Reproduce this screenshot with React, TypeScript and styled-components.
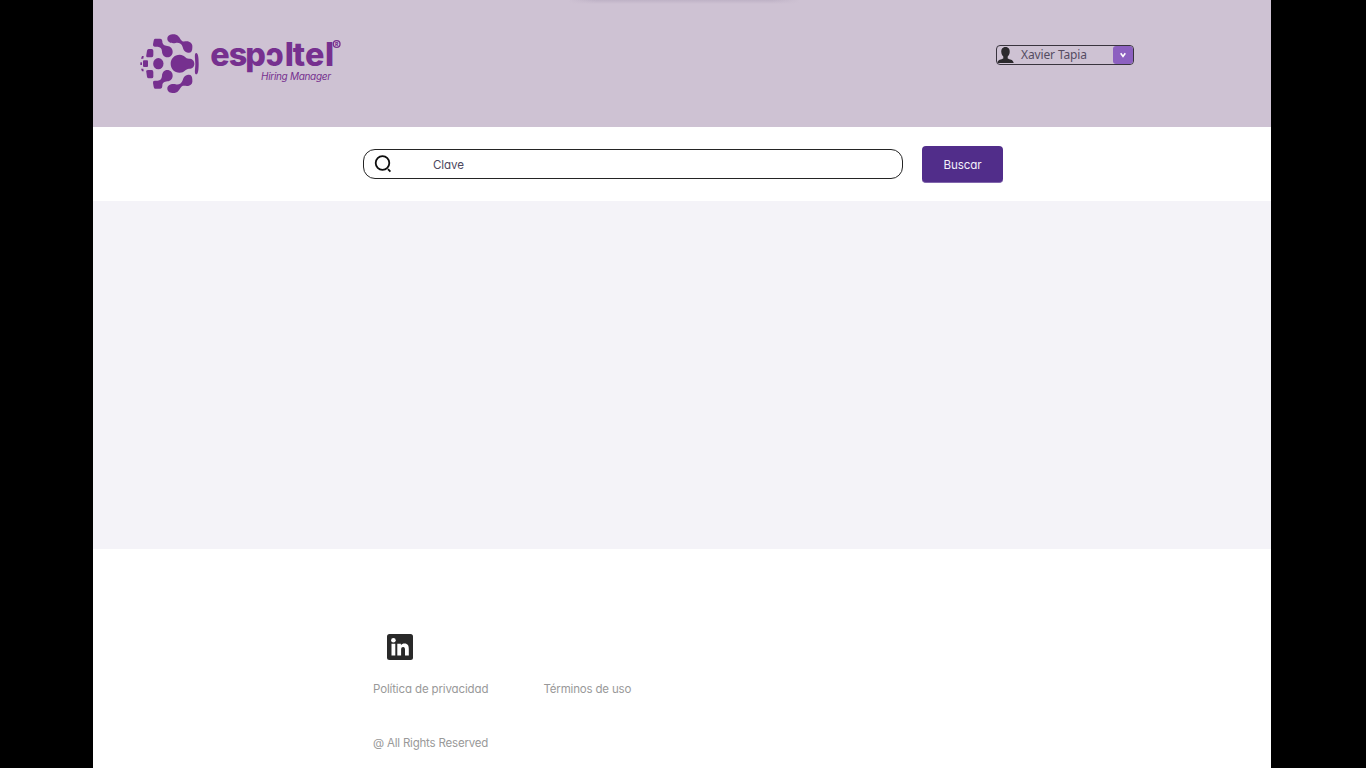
import React from 'react';
import styled, { createGlobalStyle } from 'styled-components';

const GlobalStyle = createGlobalStyle`
  * { box-sizing: border-box; }
  body { margin: 0; background: #000; overflow: hidden; }
`;

const Page = styled.div`
  width: 1178px;
  height: 768px;
  margin-left: 93px;
  display: flex;
  flex-direction: column;
  background: #fff;
  font-family: Inter, 'Liberation Sans', sans-serif;
  font-feature-settings: 'cv11';
`;

const Header = styled.header`
  height: 127px;
  display: flex;
  justify-content: space-between;
  align-items: flex-start;
  padding: 28px 137px 0 42px;
  background:
    linear-gradient(to right, #cec2d3, transparent 12%, transparent 88%, #cec2d3) 475px 0 / 232px 4px no-repeat,
    linear-gradient(to bottom, rgba(110, 95, 130, 0.16), transparent) 476px 0 / 230px 4px no-repeat,
    #cec2d3;
`;

const LogoImage = styled.svg`
  width: 210px;
  height: 70px;
  fill: #76308f;
`;

const UserSelect = styled.div`
  display: flex;
  align-items: stretch;
  width: 138px;
  height: 20px;
  margin-top: 17px;
  border: 1px solid #39343e;
  border-radius: 4px;
  overflow: hidden;
`;

const Avatar = styled.svg`
  width: 17px;
  height: 17px;
  margin-top: 1px;
  fill: #2c2a2d;
`;

const UserName = styled.span`
  flex: 1;
  padding-left: 7px;
  font: 12px/17px 'Noto Sans', sans-serif;
  letter-spacing: -0.13px;
  color: #554c62;
  white-space: nowrap;
`;

const Toggle = styled.span`
  display: flex;
  align-items: center;
  justify-content: center;
  width: 20px;
  border-radius: 3px;
  background: #8c60c0;
`;

const SearchBar = styled.section`
  height: 74px;
  display: flex;
  align-items: flex-start;
  gap: 19px;
  padding: 19px 0 0 270px;
`;

const SearchField = styled.div`
  display: flex;
  align-items: center;
  width: 540px;
  height: 30px;
  margin-top: 3px;
  padding-left: 10px;
  border: 1px solid #242424;
  border-radius: 12px;
`;

const SearchIcon = styled.svg`
  width: 18px;
  height: 18px;
  margin-right: 41px;
  fill: none;
  stroke: #0d0d0d;
  stroke-width: 1.8;
`;

const Placeholder = styled.span`
  padding-top: 2px;
  font-size: 11.6px;
  letter-spacing: -0.1px;
  color: #4d485e;
`;

const SearchButton = styled.button`
  width: 81px;
  height: 37px;
  padding: 1px 0 0;
  border: 0;
  border-bottom: 1px solid #8166ad;
  border-radius: 4px;
  background: #512d8a;
  color: #f3effa;
  font: 11.6px/36px Inter, sans-serif;
  font-feature-settings: 'cv11';
  letter-spacing: -0.1px;
`;

const Results = styled.main`
  height: 348px;
  background: #f4f3f8;
`;

const Footer = styled.footer`
  flex: 1;
  padding: 84px 0 0 280px;
  color: #999;
  font-size: 11.5px;
  line-height: 18px;
`;

const LinkedIn = styled.svg`
  display: block;
  width: 28px;
  height: 28px;
  margin-left: 13px;
`;

const FooterLinks = styled.nav`
  display: flex;
  margin-top: 19px;
`;

const FooterLink = styled.a<{ $width: number; $spacing: number }>`
  width: ${(p) => p.$width}px;
  letter-spacing: ${(p) => p.$spacing}px;
  white-space: nowrap;
`;

const Copyright = styled.p`
  margin: 36px 0 0;
  letter-spacing: -0.2px;
`;

const Cluster = () => (
  <>
    <path d="M97 31C98 21 108 18 119 19C132 21 134 33 141 39C147 43 153 38 162 41C171 44 173 51 172 59C172 69 168 75 160 74C149 73 145 65 143 57C140 47 131 43 122 45C110 48 96 43 97 31Z" />
    <path d="M60 32H76Q82 32 82 40C82 50 88 53 97 54C107 55 113 62 113 71C113 81 106 88 97 88C87 88 81 80 81 70C80 60 76 57 68 56H59Q53 56 54 49L56 38Q57 32 60 32Z" />
    <path d="M41 63H50Q55 63 55 68V82Q55 88 50 88H39Q32 88 34 81L36 68Q37 63 41 63Z" />
    <path d="M21 84H26L25 92H18Z" />
  </>
);

const Logo = () => (
  <LogoImage viewBox="0 0 630 210" role="img" aria-label="Espoltel Hiring Manager">
    <Cluster />
    <g transform="translate(0 214) scale(1 -1)">
      <Cluster />
    </g>
    <rect x="24" y="97" width="15" height="20" rx="3" />
    <rect x="16" y="103" width="5" height="8" />
    <ellipse cx="70" cy="107" rx="15.500" ry="17" />
    <path d="M134 80C149 80 151 92 162 92C172 92 178 98 178 107C178 116 172 122 162 122C151 122 149 134 134 134C118 134 107 122 107 107C107 92 118 80 134 80Z" />
    <path d="M183 75C190 74 191 91 191 107C191 123 190 140 183 139C177 137 181 120 181 107C181 94 177 77 183 75Z" />
    <text
      x="226 281 331 391 449 473 510 570"
      y="112.500"
      fontFamily="Inter, sans-serif"
      fontWeight="800"
      fontSize="97"
    >
      espɔltel
    </text>
    <circle cx="605" cy="48" r="10" fill="none" stroke="#76308f" strokeWidth="4" />
    <text x="605" y="53.500" textAnchor="middle" fontFamily="Inter, sans-serif" fontWeight="800" fontSize="15">R</text>
    <text x="378" y="155" textLength="210" fontFamily="Inter, sans-serif" fontStyle="italic" fontWeight="400" fontSize="30">
      Hiring Manager
    </text>
  </LogoImage>
);

export default function App() {
  return (
    <>
      <GlobalStyle />
      <Page>
        <Header>
          <Logo />
          <UserSelect>
            <Avatar viewBox="0 0 17 17">
              <path d="M8.500 0C5.400 0 4 2.500 4.300 5.200C4.500 7.200 5.300 8.600 6.300 9.500V11.400C4.500 12.400 .7 12.500 .3 16H16.700C16.300 12.500 12.500 12.400 10.700 11.400V9.500C11.700 8.600 12.500 7.200 12.700 5.200C13 2.500 11.600 0 8.500 0Z" />
            </Avatar>
            <UserName>Xavier Tapia</UserName>
            <Toggle>
              <svg width="8" height="8" viewBox="0 0 8 8" fill="none" stroke="#fff" strokeWidth="1.600">
                <path d="M1.700 2.300L4 5.500L6.300 2.300" />
              </svg>
            </Toggle>
          </UserSelect>
        </Header>
        <SearchBar>
          <SearchField>
            <SearchIcon viewBox="0 0 18 18">
              <circle cx="8.500" cy="8" r="6.800" />
              <path d="M14 14.200L16.400 16.700" />
            </SearchIcon>
            <Placeholder>Clave</Placeholder>
          </SearchField>
          <SearchButton>Buscar</SearchButton>
        </SearchBar>
        <Results />
        <Footer>
          <LinkedIn viewBox="0 0 28 28">
            <rect x="1" y="1" width="26" height="26" rx="2.500" fill="#292929" />
            <g fill="#fff">
              <circle cx="7.400" cy="7.300" r="2.300" />
              <path d="M5.500 10.700H9.300V22.500H5.500ZM11.300 10.700H14.900V12.300C15.600 11.100 16.900 10.500 18.500 10.500C21.900 10.500 22.800 12.800 22.800 16V22.500H19V16.800C19 15.300 18.800 13.900 17.100 13.900C15.400 13.900 15.100 15.200 15.100 16.800V22.500H11.300Z" />
            </g>
          </LinkedIn>
          <FooterLinks>
            <FooterLink $width={170.5} $spacing={-0.13}>Política de privacidad</FooterLink>
            <FooterLink $width={100} $spacing={-0.18}>Términos de uso</FooterLink>
          </FooterLinks>
          <Copyright>@ All Rights Reserved</Copyright>
        </Footer>
      </Page>
    </>
  );
}
